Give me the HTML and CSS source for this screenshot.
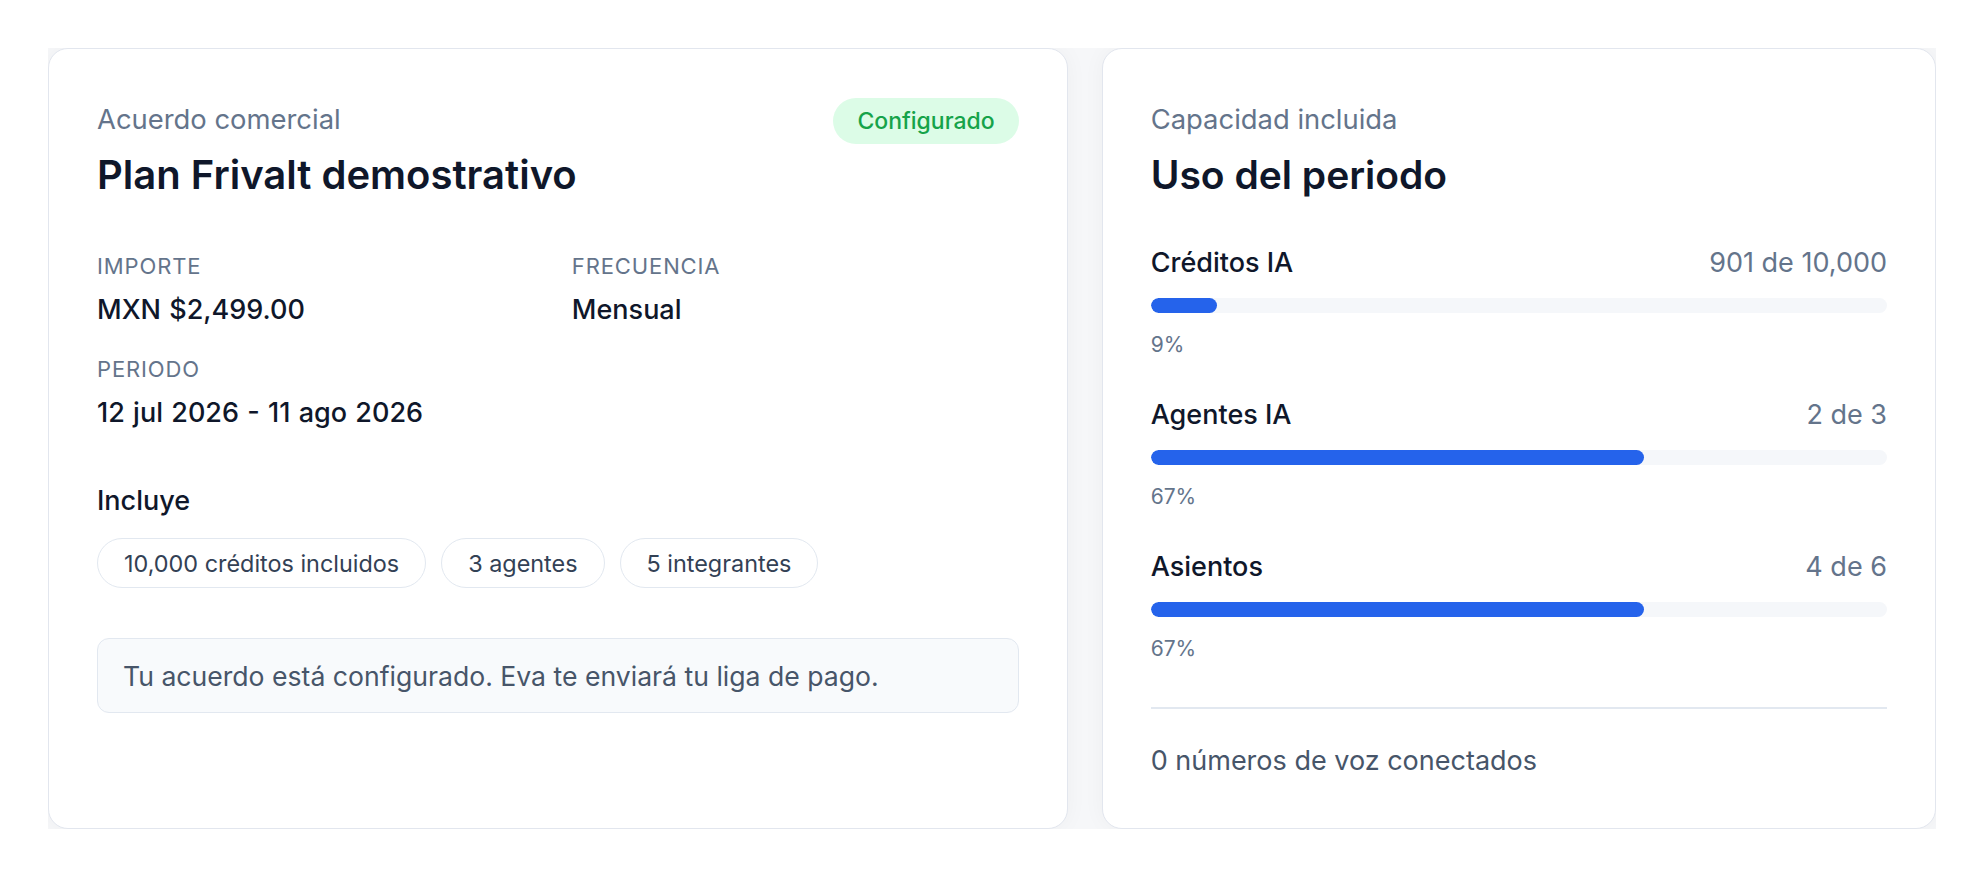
FILE: index.html
```html
<!DOCTYPE html>
<html lang="es">
<head>
<meta charset="utf-8">
<title>Acuerdo comercial</title>
<link rel="stylesheet" href="styles.css">
</head>
<body>
<main class="board">
  <section class="card plan">
    <header class="card-head">
      <div>
        <p class="eyebrow">Acuerdo comercial</p>
        <h2 class="card-title">Plan Frivalt demostrativo</h2>
      </div>
      <span class="badge">Configurado</span>
    </header>

    <dl class="facts">
      <div class="fact">
        <dt>Importe</dt>
        <dd>MXN $2,499.00</dd>
      </div>
      <div class="fact">
        <dt>Frecuencia</dt>
        <dd>Mensual</dd>
      </div>
      <div class="fact">
        <dt>Periodo</dt>
        <dd>12 jul 2026 - 11 ago 2026</dd>
      </div>
    </dl>

    <h3 class="includes-title">Incluye</h3>
    <ul class="chips">
      <li class="chip">10,000 créditos incluidos</li>
      <li class="chip">3 agentes</li>
      <li class="chip">5 integrantes</li>
    </ul>

    <p class="notice">Tu acuerdo está configurado. Eva te enviará tu liga de pago.</p>
  </section>

  <section class="card usage">
    <header>
      <p class="eyebrow">Capacidad incluida</p>
      <h2 class="card-title">Uso del periodo</h2>
    </header>

    <div class="meters">
      <div class="meter">
        <div class="meter-head">
          <span class="meter-name">Créditos IA</span>
          <span class="meter-count">901 de 10,000</span>
        </div>
        <div class="track"><div class="fill" style="width: 9%"></div></div>
        <span class="meter-pct">9%</span>
      </div>
      <div class="meter">
        <div class="meter-head">
          <span class="meter-name">Agentes IA</span>
          <span class="meter-count">2 de 3</span>
        </div>
        <div class="track"><div class="fill" style="width: 67%"></div></div>
        <span class="meter-pct">67%</span>
      </div>
      <div class="meter">
        <div class="meter-head">
          <span class="meter-name">Asientos</span>
          <span class="meter-count">4 de 6</span>
        </div>
        <div class="track"><div class="fill" style="width: 67%"></div></div>
        <span class="meter-pct">67%</span>
      </div>
    </div>

    <p class="voice">0 números de voz conectados</p>
  </section>
</main>
</body>
</html>
```

FILE: styles.css
```css
* {
  box-sizing: border-box;
  margin: 0;
  padding: 0;
}

body {
  background: #ffffff;
  padding: 48px;
  font-family: Inter, "Noto Sans", "Liberation Sans", sans-serif;
  color: #0f172a;
}

.board {
  display: grid;
  grid-template-columns: minmax(0, 11fr) minmax(0, 9fr);
  gap: 34px;
  height: 781px;
  background: #f6f7f9;
  overflow: hidden;
}

.card {
  background: #ffffff;
  border: 1px solid #e2e6ee;
  border-radius: 20px;
  padding: 48px;
  box-shadow: 0 0 22px rgba(15, 23, 42, 0.04);
}

/* headings shared by both cards */
.card-head {
  display: flex;
  justify-content: space-between;
  align-items: flex-start;
}

.eyebrow {
  font-size: 27.4px;
  line-height: 44px;
  color: #64748b;
}

.card-title {
  margin-top: 10px;
  font-size: 40px;
  line-height: 48px;
  font-weight: 600;
  color: #0f172a;
}

.usage .card-title {
  font-size: 39px;
}

.badge {
  margin-top: 1px;
  display: inline-flex;
  align-items: center;
  height: 46px;
  padding: 0 24px;
  border-radius: 999px;
  background: #dcfce7;
  color: #16a34a;
  font-size: 23px;
  font-weight: 500;
}

/* agreement facts */
.facts {
  margin-top: 52px;
  display: grid;
  grid-template-columns: 1fr 1fr;
  column-gap: 28px;
  row-gap: 26px;
}

.fact dt {
  font-size: 22px;
  line-height: 30px;
  text-transform: uppercase;
  letter-spacing: 0.04em;
  color: #64748b;
}

.fact dd {
  margin-top: 11px;
  font-size: 27px;
  line-height: 36px;
  font-weight: 500;
  color: #0f172a;
  word-spacing: 0.04em;
}

.includes-title {
  margin-top: 52px;
  font-size: 27px;
  line-height: 36px;
  font-weight: 500;
  color: #0f172a;
}

.chips {
  margin-top: 19px;
  list-style: none;
  display: flex;
  gap: 15px;
}

.chip {
  display: inline-flex;
  align-items: center;
  height: 50px;
  padding: 0 26px;
  border: 1px solid #e2e8f0;
  border-radius: 999px;
  font-size: 23.4px;
  color: #334155;
}

.notice {
  margin-top: 50px;
  display: flex;
  align-items: center;
  height: 75px;
  padding: 0 25px;
  background: #f8fafc;
  border: 1px solid #e2e8f0;
  border-radius: 12px;
  font-size: 26.6px;
  color: #475569;
}

/* usage meters */
.meters {
  margin-top: 46px;
  display: flex;
  flex-direction: column;
  gap: 37px;
}

.meter {
  display: flex;
  flex-direction: column;
}

.meter-head {
  display: flex;
  justify-content: space-between;
  align-items: center;
  line-height: 36px;
}

.meter-name {
  font-size: 27px;
  font-weight: 500;
  color: #0f172a;
}

.meter-count {
  font-size: 27px;
  color: #64748b;
}

.track {
  margin-top: 17px;
  height: 15px;
  border-radius: 999px;
  background: #f5f7fa;
  overflow: hidden;
}

.fill {
  height: 100%;
  border-radius: 999px;
  background: #2563eb;
}

.meter-pct {
  margin-top: 17px;
  font-size: 21px;
  line-height: 30px;
  color: #64748b;
}

.voice {
  margin-top: 43px;
  padding-top: 34px;
  border-top: 2px solid #e2e8f0;
  font-size: 27px;
  line-height: 36px;
  color: #475569;
}
```
